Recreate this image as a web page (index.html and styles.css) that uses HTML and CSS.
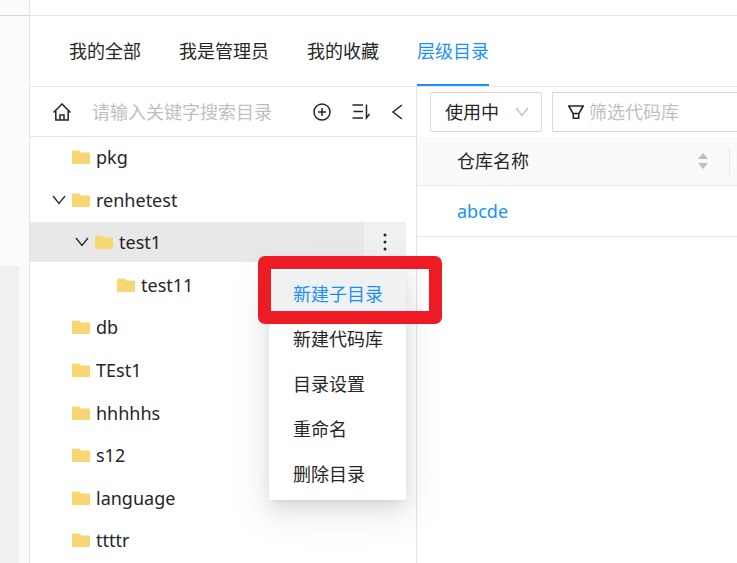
FILE: index.html
```html
<!DOCTYPE html>
<html lang="zh-CN">
    <head>
        <meta charset="UTF-8" />
        <meta name="viewport" content="width=device-width, initial-scale=1.0" />
        <title>层级目录</title>
        <link rel="stylesheet" href="styles.css">
    </head>
    <body>
        <svg class="symbols" width="0" height="0" aria-hidden="true">
            <symbol id="folder" viewBox="0 0 18 16">
                <path d="M1 1.500h6L9.500 3.500H17a1 1 0 0 1 1 1V14a1 1 0 0 1-1 1H1a1 1 0 0 1-1-1V2.500a1 1 0 0 1 1-1z" fill="#f7d774" />
            </symbol>
            <symbol id="arrow-down" viewBox="0 0 14 10">
                <path d="M1 1l6 7.500L13 1" fill="none" stroke="currentColor" stroke-width="1.300" />
            </symbol>
        </svg>

        <div class="layout">
            <aside class="rail">
                <div class="rail-top"></div>
                <div class="rail-block"></div>
            </aside>

            <main class="main">
                <div class="topbar"></div>
                <nav class="tabs">
                    <a href="#">我的全部</a>
                    <a href="#">我是管理员</a>
                    <a href="#">我的收藏</a>
                    <a href="#" class="active">层级目录</a>
                </nav>

                <div class="content">
                    <section class="sidebar">
                        <div class="tree-search">
                            <button type="button" class="icon-btn" aria-label="首页">
                                <svg width="18" height="18" viewBox="0 0 18 18" fill="none" stroke="currentColor" stroke-width="1.500">
                                    <path d="M.5 9.500L9 1l8.500 8.500M2.800 8v9h12.400V8M7 17v-5h4v5" />
                                </svg>
                            </button>
                            <input type="text" class="tree-input" placeholder="请输入关键字搜索目录" aria-label="搜索目录" />
                            <button type="button" class="icon-btn" aria-label="新建">
                                <svg width="18" height="18" viewBox="0 0 18 18" fill="none" stroke="currentColor" stroke-width="1.500">
                                    <circle cx="9" cy="9" r="8" />
                                    <path d="M9 5v8M5 9h8" />
                                </svg>
                            </button>
                            <button type="button" class="icon-btn" aria-label="排序">
                                <svg width="18" height="18" viewBox="0 0 18 18" fill="none" stroke="currentColor" stroke-width="1.500">
                                    <path d="M.5 2H11M1.500 8.500H11M.5 15H11M14.500 1.500V15l3-4" />
                                </svg>
                            </button>
                            <button type="button" class="icon-btn" aria-label="收起">
                                <svg width="12" height="18" viewBox="0 0 12 18" fill="none" stroke="currentColor" stroke-width="1.500">
                                    <path d="M11 2L2 9l9 7" />
                                </svg>
                            </button>
                        </div>

                        <ul class="tree">
                            <li>
                                <div class="node"><span class="toggle"></span><svg class="folder"><use href="#folder" /></svg>pkg</div>
                            </li>
                            <li>
                                <div class="node"><svg class="toggle"><use href="#arrow-down" /></svg><svg class="folder"><use href="#folder" /></svg>renhetest</div>
                            </li>
                            <li>
                                <div class="node level-2 selected">
                                    <svg class="toggle"><use href="#arrow-down" /></svg><svg class="folder"><use href="#folder" /></svg>test1
                                    <button type="button" class="more" aria-label="更多">
                                        <svg width="4" height="18" viewBox="0 0 4 18" fill="currentColor">
                                            <circle cx="2" cy="2" r="1.500" />
                                            <circle cx="2" cy="9" r="1.500" />
                                            <circle cx="2" cy="16" r="1.500" />
                                        </svg>
                                    </button>
                                    <div class="menu">
                                        <button type="button" class="active">新建子目录</button>
                                        <button type="button">新建代码库</button>
                                        <button type="button">目录设置</button>
                                        <button type="button">重命名</button>
                                        <button type="button">删除目录</button>
                                        <div class="highlight"></div>
                                    </div>
                                </div>
                            </li>
                            <li>
                                <div class="node level-3"><span class="toggle"></span><svg class="folder"><use href="#folder" /></svg>test11</div>
                            </li>
                            <li>
                                <div class="node"><span class="toggle"></span><svg class="folder"><use href="#folder" /></svg>db</div>
                            </li>
                            <li>
                                <div class="node"><span class="toggle"></span><svg class="folder"><use href="#folder" /></svg>TEst1</div>
                            </li>
                            <li>
                                <div class="node"><span class="toggle"></span><svg class="folder"><use href="#folder" /></svg>hhhhhs</div>
                            </li>
                            <li>
                                <div class="node"><span class="toggle"></span><svg class="folder"><use href="#folder" /></svg>s12</div>
                            </li>
                            <li>
                                <div class="node"><span class="toggle"></span><svg class="folder"><use href="#folder" /></svg>language</div>
                            </li>
                            <li>
                                <div class="node"><span class="toggle"></span><svg class="folder"><use href="#folder" /></svg>ttttr</div>
                            </li>
                        </ul>
                    </section>

                    <section class="repos">
                        <div class="filters">
                            <div class="status">
                                <select aria-label="状态">
                                    <option>使用中</option>
                                </select>
                                <svg><use href="#arrow-down" /></svg>
                            </div>
                            <label class="filter">
                                <svg width="16" height="16" viewBox="0 0 16 16" fill="none" stroke="currentColor" stroke-width="1.600">
                                    <path d="M.8 2h14.400L11 9.500H5zM5.300 9.500v4.700h5.400V9.500" />
                                </svg>
                                <input type="text" placeholder="筛选代码库" aria-label="筛选代码库" />
                            </label>
                        </div>

                        <table class="repo-table">
                            <thead>
                                <tr>
                                    <th>
                                        <div class="th-inner">
                                            仓库名称
                                            <svg width="10" height="16" viewBox="0 0 10 16" fill="#bfbfbf">
                                                <path d="M5 0l5 6H0zM5 16l5-6H0z" />
                                            </svg>
                                        </div>
                                    </th>
                                    <th class="next"></th>
                                </tr>
                            </thead>
                            <tbody>
                                <tr>
                                    <td><a href="#">abcde</a></td>
                                    <td></td>
                                </tr>
                            </tbody>
                        </table>
                    </section>
                </div>
            </main>
        </div>
    </body>
</html>
```

FILE: styles.css
```css
* {
    box-sizing: border-box;
}

body {
    margin: 0;
    font-family: "Noto Sans", "Noto Sans CJK SC", sans-serif;
    font-size: 18px;
    line-height: 24px;
    color: #262626;
    background-color: #fff;
    overflow: hidden;
}

button,
input,
select {
    font: inherit;
    color: inherit;
    margin: 0;
    padding: 0;
    border: none;
    background: none;
    outline: none;
}

button {
    cursor: pointer;
}

a {
    color: #1890ff;
    text-decoration: none;
}

svg {
    display: block;
    flex: none;
}

.symbols {
    position: absolute;
}

.layout {
    display: flex;
    min-height: 100vh;
}

/* left rail */
.rail {
    display: flex;
    flex-direction: column;
    width: 30px;
    background-color: #fafbfd;
    border-right: 1px solid #e4e6ea;
}

.rail-top {
    height: 16px;
    border-bottom: 1px solid #d4d5d7;
}

.rail-block {
    flex: 1;
    margin-top: 250px;
    margin-right: 10px;
    background-color: #eff0f2;
}

.main {
    flex: 1;
    display: flex;
    flex-direction: column;
    min-width: 0;
}

.topbar {
    height: 16px;
    border-bottom: 1px solid #e5e6e8;
}

/* tabs */
.tabs {
    display: flex;
    gap: 38px;
    height: 71px;
    padding-left: 39px;
    border-bottom: 1px solid #e5e6eb;
}

.tabs a {
    padding-top: 23px;
    color: #262626;
    white-space: nowrap;
}

.tabs a.active {
    color: #1890ff;
    border-bottom: 2px solid #1890ff;
}

.content {
    flex: 1;
    display: flex;
}

/* directory tree */
.sidebar {
    display: flex;
    flex-direction: column;
    width: 387px;
    border-right: 1px solid #e4e4e6;
}

.tree-search {
    display: flex;
    align-items: center;
    gap: 21px;
    height: 50px;
    padding: 0 13px 0 23px;
    border-bottom: 1px solid #e5e6e8;
}

.tree-input {
    flex: 1;
    min-width: 0;
}

.tree-input::placeholder,
.filter input::placeholder {
    color: #bfbfbf;
    opacity: 1;
}

.tree {
    flex: 1;
    display: grid;
    grid-auto-rows: 1fr;
    margin: 0;
    padding: 0;
    list-style: none;
}

.node {
    position: relative;
    display: flex;
    align-items: center;
    gap: 6px;
    height: 40px;
    margin-right: 10px;
    padding-left: 22px;
}

.level-2 {
    padding-left: 45px;
}

.level-3 {
    padding-left: 67px;
}

.selected {
    background-color: #e8e8e8;
}

.toggle {
    width: 14px;
    height: 10px;
}

.folder {
    width: 18px;
    height: 16px;
}

.more {
    display: flex;
    align-items: center;
    justify-content: center;
    width: 42px;
    height: 40px;
    margin-left: auto;
    background-color: #f0f0f0;
}

/* context menu */
.menu {
    position: absolute;
    top: 45px;
    right: 0;
    z-index: 1;
    width: 137px;
    padding: 4px 0;
    background-color: #fff;
    border-radius: 2px;
    box-shadow: 0 3px 6px -4px rgba(0, 0, 0, 0.12),
        0 8px 20px rgba(0, 0, 0, 0.1), 0 12px 40px 8px rgba(0, 0, 0, 0.06);
}

.menu button {
    display: block;
    width: 100%;
    height: 45px;
    padding-left: 24px;
    text-align: left;
}

.menu button.active {
    color: #1890ff;
    background-color: #f0f1f3;
}

.highlight {
    position: absolute;
    top: -11px;
    left: -11px;
    width: 184px;
    height: 68px;
    border: 13px solid #ed1c24;
    border-radius: 7px;
    pointer-events: none;
}

/* repository list */
.repos {
    flex: 1;
    min-width: 0;
}

.filters {
    display: flex;
    gap: 10px;
    height: 50px;
    padding: 5px 0 5px 13px;
}

.status {
    position: relative;
    width: 112px;
}

.status select {
    width: 100%;
    height: 40px;
    padding-left: 14px;
    border: 1px solid #d9d9d9;
    border-radius: 2px;
    appearance: none;
}

.status svg {
    position: absolute;
    top: 15px;
    right: 13px;
    width: 14px;
    height: 10px;
    color: #bfbfbf;
    pointer-events: none;
}

.filter {
    flex: 1;
    display: flex;
    align-items: center;
    gap: 5px;
    min-width: 0;
    padding-left: 15px;
    border: 1px solid #d9d9d9;
    border-right: none;
    border-radius: 2px 0 0 2px;
}

.filter input {
    flex: 1;
    min-width: 0;
}

.repo-table {
    width: 100%;
    border-collapse: separate;
    border-spacing: 0;
}

.repo-table th,
.repo-table td {
    padding: 0 0 0 40px;
    border-bottom: 1px solid #e8e8e8;
    font-weight: normal;
    text-align: left;
}

.repo-table th {
    height: 49px;
    background-color: #fafafa;
}

.repo-table td {
    height: 51px;
}

.th-inner {
    display: flex;
    align-items: center;
    justify-content: space-between;
    height: 28px;
    padding-right: 21px;
    border-right: 1px solid #e8e8e8;
}

.repo-table .next,
.repo-table td + td {
    width: 7px;
    padding: 0;
}
```
